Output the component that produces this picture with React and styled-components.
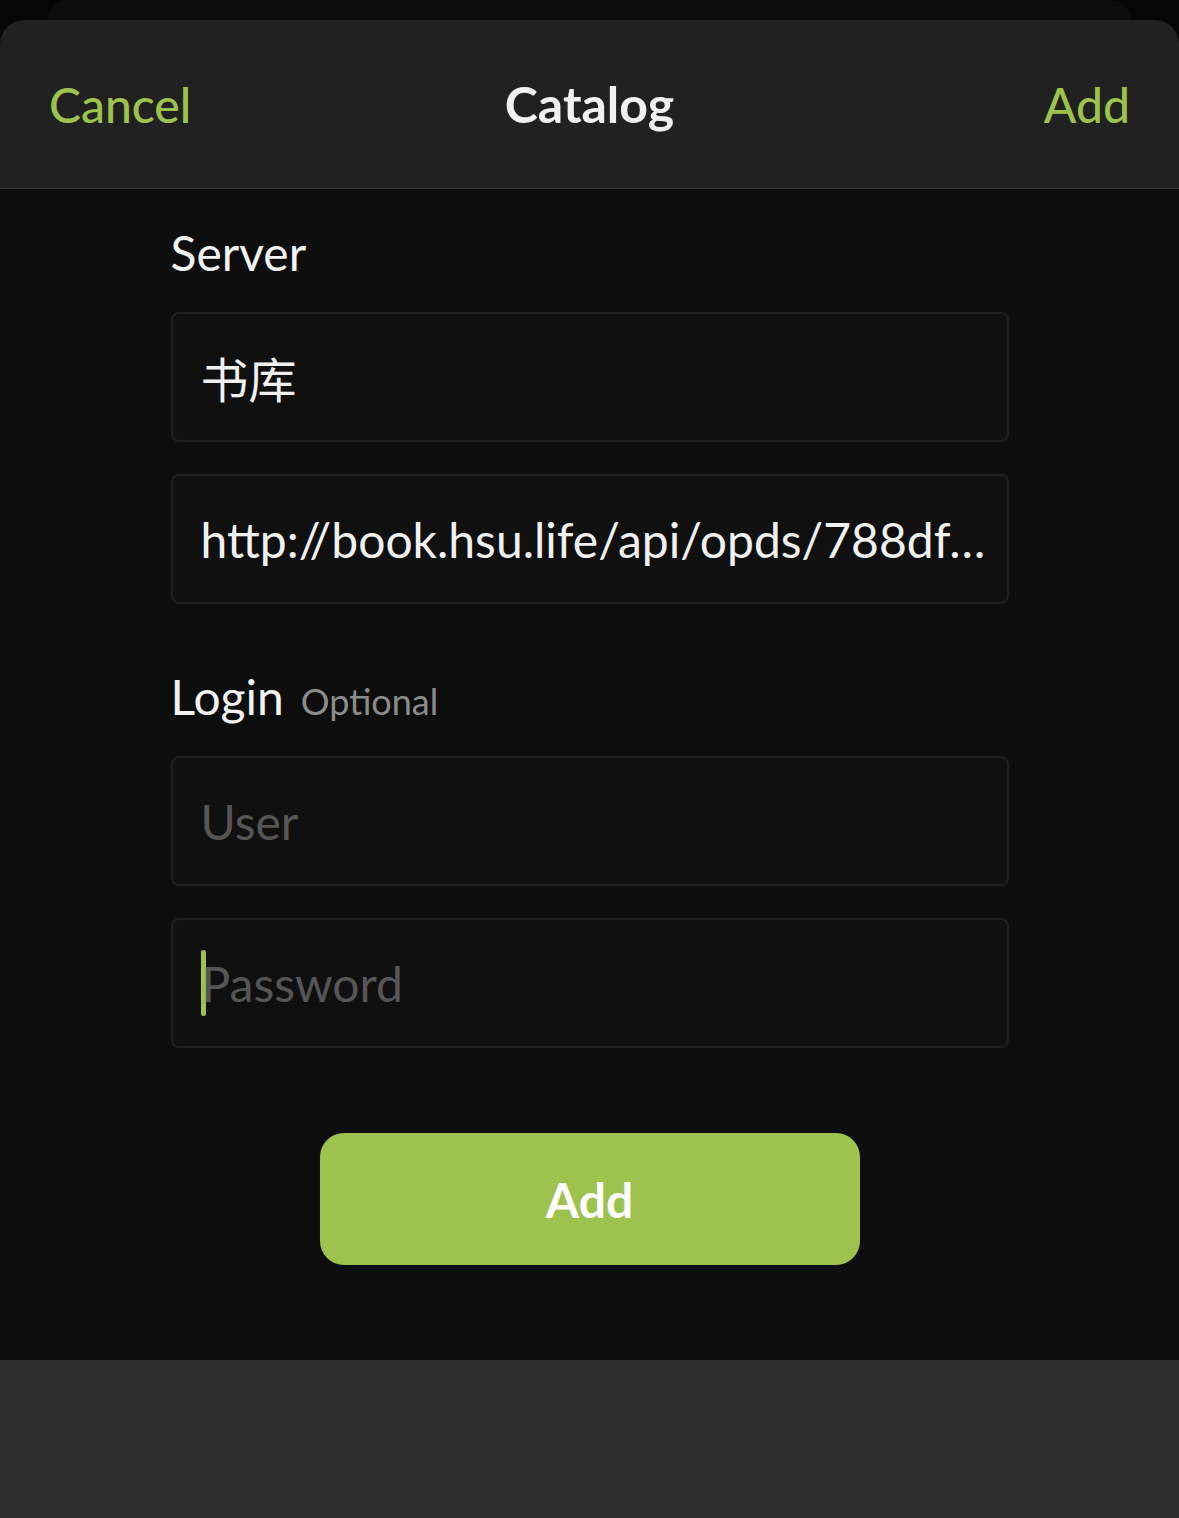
import React from 'react';
import styled, { createGlobalStyle } from 'styled-components';

const GlobalStyle = createGlobalStyle`
  html, body {
    margin: 0;
    padding: 0;
    background: #060606;
  }
  body {
    font-family: Lato, "Noto Sans", "Noto Sans CJK SC", sans-serif;
    -webkit-font-smoothing: antialiased;
  }
`

const Screen = styled.div`
  display: flex;
  flex-direction: column;
  width: 1179px;
  height: 1518px;
  background: #060606;
  overflow: hidden;
`

const BehindCard = styled.div`
  height: 20px;
  margin: 0 48px;
  background: #0c0c0c;
  border-radius: 22px 22px 0 0;
`

const Sheet = styled.div`
  display: flex;
  flex-direction: column;
  border-radius: 24px 24px 0 0;
  overflow: hidden;
`

const Header = styled.div`
  display: grid;
  grid-template-columns: 1fr auto 1fr;
  align-items: center;
  height: 168px;
  padding: 0 49px;
  background: #212121;
  border-bottom: 1px solid #383838;
`

const HeaderAction = styled.div`
  font-size: 48px;
  font-weight: 500;
  color: #9dc24e;
  justify-self: ${p => (p.$right ? 'end' : 'start')};
`

const Title = styled.div`
  font-size: 50px;
  font-weight: 700;
  color: #f0f0f0;
`

const Body = styled.div`
  display: flex;
  flex-direction: column;
  align-items: center;
  background: #0e0e0e;
  padding: 34px 0 95px;
`

const Form = styled.div`
  display: flex;
  flex-direction: column;
  width: 838px;
`

const Label = styled.div`
  display: flex;
  align-items: baseline;
  gap: 17px;
  height: 60px;
  line-height: 60px;
  font-size: 48px;
  color: #f2f2f2;
  margin-top: ${p => p.$top || 0}px;
  margin-bottom: 29px;
`

const Hint = styled.span`
  font-size: 36px;
  color: #8c8c8c;
`

const Field = styled.div`
  display: flex;
  align-items: center;
  box-sizing: border-box;
  height: 130px;
  padding: 0 22px 0 28px;
  border: 2px solid #202020;
  border-radius: 8px;
  background: #101010;
  font-size: 48px;
  color: ${p => (p.$placeholder ? '#565656' : '#f0f0f0')};
  white-space: nowrap;
  overflow: hidden;
  & + & {
    margin-top: 32px;
  }
`

const Caret = styled.span`
  display: inline-block;
  width: 5px;
  height: 66px;
  margin-right: -4px;
  border-radius: 3px;
  background: #9dc24e;
`

const AddButton = styled.button`
  align-self: center;
  width: 540px;
  height: 132px;
  margin-top: 85px;
  border: none;
  border-radius: 24px;
  background: #9dc24e;
  color: #ffffff;
  font-family: inherit;
  font-size: 48px;
  font-weight: 700;
`

const Footer = styled.div`
  flex: 1;
  background: #2e2e2e;
`

const App = () => {
  return (
    <>
      <GlobalStyle />
      <Screen>
        <BehindCard />
        <Sheet>
          <Header>
            <HeaderAction>Cancel</HeaderAction>
            <Title>Catalog</Title>
            <HeaderAction $right>Add</HeaderAction>
          </Header>
          <Body>
            <Form>
              <Label>Server</Label>
              <Field>书库</Field>
              <Field>http://book.hsu.life/api/opds/788df…</Field>
              <Label $top={63}>
                Login <Hint>Optional</Hint>
              </Label>
              <Field $placeholder>User</Field>
              <Field $placeholder>
                <Caret />
                Password
              </Field>
              <AddButton>Add</AddButton>
            </Form>
          </Body>
        </Sheet>
        <Footer />
      </Screen>
    </>
  )
}

export default App;
